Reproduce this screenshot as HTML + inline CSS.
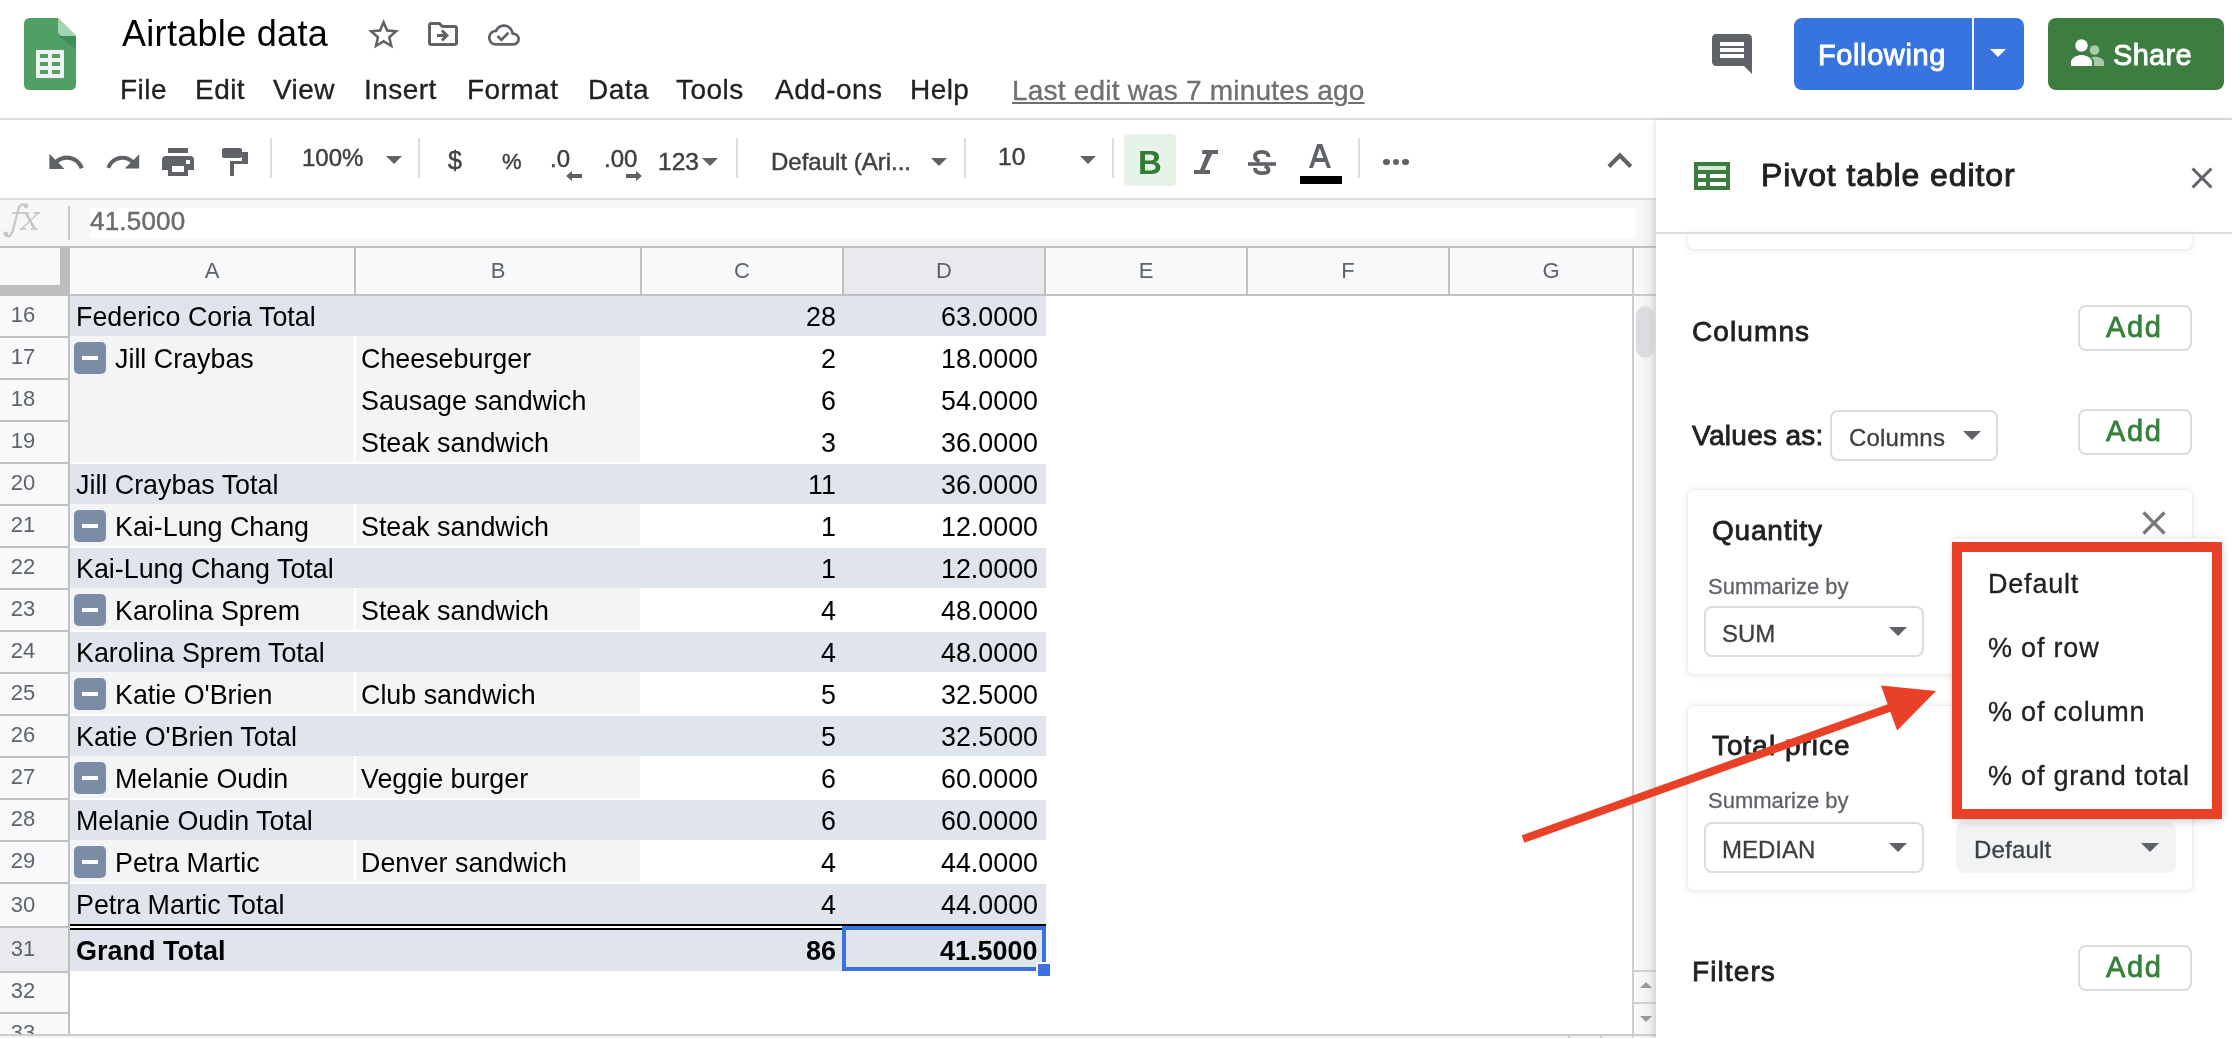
<!DOCTYPE html>
<html><head><meta charset="utf-8"><style>
html,body{margin:0;padding:0;width:2232px;height:1038px;overflow:hidden;background:#fff;}
body{position:relative;font-family:"Liberation Sans",sans-serif;}
.t{position:absolute;line-height:1;white-space:pre;will-change:transform;}
.r{position:absolute;box-sizing:content-box;}
</style></head><body>
<svg class="r" style="left:24px;top:18px;" width="52" height="72" viewBox="0 0 52 72">
<path d="M0 6 Q0 0 6 0 H34 L52 18 V66 Q52 72 46 72 H6 Q0 72 0 66 Z" fill="#4fa064"/>
<path d="M34 0 L52 18 H40 Q34 18 34 12 Z" fill="#a3d3b3"/>
<path d="M34 18 H52 V31 Z" fill="#3f8a5a" opacity="0.9"/>
<rect x="12" y="32" width="28" height="28" fill="#f1f1f1"/>
<rect x="16" y="36" width="8" height="4" fill="#4fa064"/><rect x="28" y="36" width="8" height="4" fill="#4fa064"/>
<rect x="16" y="44" width="8" height="4" fill="#4fa064"/><rect x="28" y="44" width="8" height="4" fill="#4fa064"/>
<rect x="16" y="52" width="8" height="4" fill="#4fa064"/><rect x="28" y="52" width="8" height="4" fill="#4fa064"/>
</svg>
<div class="t" style="left:122.0px;top:15.5px;font-size:36px;color:#000;font-weight:400;font-family:'Liberation Sans', sans-serif;letter-spacing:0.3px;">Airtable data</div>
<svg class="r" style="left:364.9px;top:15.6px;" width="37.2" height="37.2" viewBox="0 0 24 24"><path fill="#5f6368" d="M22 9.24l-7.19-.62L12 2 9.19 8.63 2 9.24l5.46 4.73L5.82 21 12 17.27 18.18 21l-1.63-7.03L22 9.24zM12 15.4l-3.76 2.27 1-4.28-3.32-2.88 4.38-.38L12 6.1l1.71 4.04 4.38.38-3.32 2.88 1 4.28L12 15.4z"/></svg>
<svg class="r" style="left:425px;top:16px;" width="36" height="36" viewBox="0 0 24 24"><path fill="#5f6368" d="M20 6h-8l-2-2H4c-1.1 0-1.99.9-1.99 2L2 18c0 1.1.9 2 2 2h16c1.1 0 2-.9 2-2V8c0-1.1-.9-2-2-2zm0 12H4V6h5.17l2 2H20v10zm-8.01-9l-1.41 1.41L12.16 12H8v2h4.16l-1.59 1.59L11.99 17 16 13.01 11.99 9z"/></svg>
<svg class="r" style="left:488px;top:18.6px;" width="32" height="32" viewBox="0 0 24 24"><path fill="#5f6368" d="M19.35 10.04C18.67 6.59 15.64 4 12 4 9.11 4 6.6 5.64 5.35 8.04 2.34 8.36 0 10.91 0 14c0 3.31 2.69 6 6 6h13c2.76 0 5-2.24 5-5 0-2.64-2.05-4.78-4.65-4.96zM19 18H6c-2.21 0-4-1.790-4-4 0-2.05 1.53-3.76 3.56-3.97l1.07-.11.5-.95C8.08 7.140 9.94 6 12 6c2.62 0 4.88 1.86 5.39 4.43l.3 1.5 1.53.11c1.56.1 2.78 1.41 2.78 2.96 0 1.65-1.35 3-3 3zm-9-3.82l-2.09-2.09L6.5 13.5 10 17l6.01-6.01-1.41-1.41z"/></svg>
<div class="t" style="left:120.0px;top:76.1px;font-size:28px;color:#202124;font-weight:400;font-family:'Liberation Sans', sans-serif;letter-spacing:0.45px;-webkit-text-stroke:0.3px #202124;">File</div>
<div class="t" style="left:195.0px;top:76.1px;font-size:28px;color:#202124;font-weight:400;font-family:'Liberation Sans', sans-serif;letter-spacing:0.45px;-webkit-text-stroke:0.3px #202124;">Edit</div>
<div class="t" style="left:273.0px;top:76.1px;font-size:28px;color:#202124;font-weight:400;font-family:'Liberation Sans', sans-serif;letter-spacing:0.45px;-webkit-text-stroke:0.3px #202124;">View</div>
<div class="t" style="left:364.0px;top:76.1px;font-size:28px;color:#202124;font-weight:400;font-family:'Liberation Sans', sans-serif;letter-spacing:0.45px;-webkit-text-stroke:0.3px #202124;">Insert</div>
<div class="t" style="left:467.0px;top:76.1px;font-size:28px;color:#202124;font-weight:400;font-family:'Liberation Sans', sans-serif;letter-spacing:0.45px;-webkit-text-stroke:0.3px #202124;">Format</div>
<div class="t" style="left:588.0px;top:76.1px;font-size:28px;color:#202124;font-weight:400;font-family:'Liberation Sans', sans-serif;letter-spacing:0.45px;-webkit-text-stroke:0.3px #202124;">Data</div>
<div class="t" style="left:676.0px;top:76.1px;font-size:28px;color:#202124;font-weight:400;font-family:'Liberation Sans', sans-serif;letter-spacing:0.45px;-webkit-text-stroke:0.3px #202124;">Tools</div>
<div class="t" style="left:775.0px;top:76.1px;font-size:28px;color:#202124;font-weight:400;font-family:'Liberation Sans', sans-serif;letter-spacing:0.45px;-webkit-text-stroke:0.3px #202124;">Add-ons</div>
<div class="t" style="left:910.0px;top:76.1px;font-size:28px;color:#202124;font-weight:400;font-family:'Liberation Sans', sans-serif;letter-spacing:0.45px;-webkit-text-stroke:0.3px #202124;">Help</div>
<div class="t" style="left:1012.0px;top:77.0px;font-size:28px;color:#6f6f6f;font-weight:400;font-family:'Liberation Sans', sans-serif;letter-spacing:0.2px;-webkit-text-stroke:0.35px #6f6f6f;text-decoration:underline;text-underline-offset:2px;text-decoration-thickness:2px;">Last edit was 7 minutes ago</div>
<svg class="r" style="left:1707.6px;top:29.6px;" width="48" height="48" viewBox="0 0 24 24"><path fill="#5f6368" d="M21.99 4c0-1.1-.89-2-1.99-2H4c-1.1 0-2 .9-2 2v12c0 1.1.9 2 2 2h14l4 4-.01-18zM18 14H6v-2h12v2zm0-3H6V9h12v2zm0-3H6V6h12v2z"/></svg>
<div class="r" style="left:1794px;top:18px;width:230px;height:72px;background:#3874e0;border-radius:8px"></div>
<div class="r" style="left:1972px;top:18px;width:2px;height:72px;background:#ffffff;"></div>
<div class="t" style="left:1818.0px;top:40.6px;font-size:29px;color:#fff;font-weight:400;font-family:'Liberation Sans', sans-serif;letter-spacing:0.6px;-webkit-text-stroke:0.9px #fff;">Following</div>
<svg class="r" style="left:1990px;top:49px;" width="16" height="8" viewBox="0 0 10 5"><path fill="#fff" d="M0 0 L10 0 L5 5 Z"/></svg>
<div class="r" style="left:2048px;top:18px;width:176px;height:72px;background:#3d7e40;border-radius:8px"></div>
<svg class="r" style="left:2071px;top:39px;" width="33" height="27" viewBox="0 0 33 27"><circle cx="10.5" cy="6.5" r="6.2" fill="#fff"/><path d="M0 27 v-4 c0-4.5 7-7 10.5-7 s10.5 2.5 10.5 7 v4z" fill="#fff"/><circle cx="23.5" cy="11" r="4.8" fill="#a9c9ab"/><path d="M20 18.2 c1.2-.3 2.5-.5 3.5-.5 c3.5 0 9.5 1.8 9.5 5.2 v4.1 h-10 v-4 c0-1.9-1.1-3.5-3-4.8z" fill="#a9c9ab"/></svg>
<div class="t" style="left:2113.0px;top:40.6px;font-size:29px;color:#fff;font-weight:400;font-family:'Liberation Sans', sans-serif;letter-spacing:0.3px;-webkit-text-stroke:0.9px #fff;">Share</div>
<div class="r" style="left:0px;top:118px;width:2232px;height:2px;background:#dadce0;"></div>
<svg class="r" style="left:46.34px;top:141.94px" width="40.32" height="40.32" viewBox="0 0 24 24"><path fill="#5f6368" d="M12.5 8c-2.65 0-5.05.99-6.9 2.6L2 7v9h9l-3.62-3.62c1.39-1.16 3.16-1.88 5.12-1.88 3.54 0 6.55 2.31 7.6 5.5l2.37-.78C21.08 11.03 17.15 8 12.5 8z"/></svg>
<svg class="r" style="left:103.54px;top:142.50px" width="38.40" height="38.40" viewBox="0 0 24 24"><path fill="#5f6368" d="M18.4 10.6C16.55 8.99 14.15 8 11.5 8c-4.65 0-8.58 3.03-9.96 7.22L3.9 16c1.05-3.19 4.05-5.5 7.6-5.5 1.95 0 3.73.72 5.12 1.88L13 16h9V7l-3.6 3.6z"/></svg>
<div class="r" style="left:168px;top:148px;width:20px;height:5px;background:#5f6368;"></div>
<div class="r" style="left:162px;top:156px;width:32px;height:14px;background:#5f6368;border-radius:4px 4px 0 0"></div>
<div class="r" style="left:186px;top:160px;width:4px;height:4px;background:#fff;"></div>
<div class="r" style="left:168px;top:166px;width:20px;height:10px;background:#5f6368;"></div>
<div class="r" style="left:172px;top:166px;width:12px;height:6px;background:#fff;"></div>
<div class="r" style="left:222px;top:148px;width:20px;height:10px;background:#5f6368;border-radius:2px"></div>
<div class="r" style="left:242px;top:152px;width:6px;height:12px;background:#5f6368;"></div>
<div class="r" style="left:230px;top:161px;width:18px;height:3px;background:#5f6368;"></div>
<div class="r" style="left:230px;top:161px;width:4px;height:15px;background:#5f6368;"></div>
<div class="r" style="left:270px;top:138px;width:2px;height:40px;background:#dadce0;"></div>
<div class="r" style="left:418px;top:138px;width:2px;height:40px;background:#dadce0;"></div>
<div class="r" style="left:736px;top:138px;width:2px;height:40px;background:#dadce0;"></div>
<div class="r" style="left:964px;top:138px;width:2px;height:40px;background:#dadce0;"></div>
<div class="r" style="left:1112px;top:138px;width:2px;height:40px;background:#dadce0;"></div>
<div class="r" style="left:1358px;top:138px;width:2px;height:40px;background:#dadce0;"></div>
<div class="t" style="left:302.0px;top:145.7px;font-size:24px;color:#3c4043;font-weight:400;font-family:'Liberation Sans', sans-serif;-webkit-text-stroke:0.45px currentColor;">100%</div>
<svg class="r" style="left:386px;top:156px;" width="16" height="8" viewBox="0 0 10 5"><path fill="#5f6368" d="M0 0 H10 L5 5 Z"/></svg>
<div class="t" style="left:448.0px;top:148.4px;font-size:25px;color:#3c4043;font-weight:400;font-family:'Liberation Sans', sans-serif;-webkit-text-stroke:0.45px currentColor;">$</div>
<div class="t" style="left:502.0px;top:151.0px;font-size:22px;color:#3c4043;font-weight:400;font-family:'Liberation Sans', sans-serif;-webkit-text-stroke:0.45px currentColor;">%</div>
<div class="t" style="left:549.5px;top:147.3px;font-size:24px;color:#3c4043;font-weight:400;font-family:'Liberation Sans', sans-serif;-webkit-text-stroke:0.45px currentColor;">.0</div>
<svg class="r" style="left:566px;top:171px;" width="16" height="10" viewBox="0 0 16 10"><path fill="#5f6368" d="M6 0 L0 5 L6 10 V7 H16 V3 H6 Z"/></svg>
<div class="t" style="left:604.0px;top:147.3px;font-size:24px;color:#3c4043;font-weight:400;font-family:'Liberation Sans', sans-serif;-webkit-text-stroke:0.45px currentColor;">.00</div>
<svg class="r" style="left:626px;top:171px;" width="16" height="10" viewBox="0 0 16 10"><path fill="#5f6368" d="M10 0 L16 5 L10 10 V7 H0 V3 H10 Z"/></svg>
<div class="t" style="left:658.0px;top:149.6px;font-size:24.5px;color:#3c4043;font-weight:400;font-family:'Liberation Sans', sans-serif;-webkit-text-stroke:0.45px currentColor;">123</div>
<svg class="r" style="left:702px;top:158px;" width="16" height="8" viewBox="0 0 10 5"><path fill="#5f6368" d="M0 0 H10 L5 5 Z"/></svg>
<div class="t" style="left:771.0px;top:149.7px;font-size:24px;color:#3c4043;font-weight:400;font-family:'Liberation Sans', sans-serif;-webkit-text-stroke:0.45px currentColor;">Default (Ari...</div>
<svg class="r" style="left:930.7px;top:158px;" width="16" height="8" viewBox="0 0 10 5"><path fill="#5f6368" d="M0 0 H10 L5 5 Z"/></svg>
<div class="t" style="left:997.5px;top:145.3px;font-size:24.5px;color:#3c4043;font-weight:400;font-family:'Liberation Sans', sans-serif;-webkit-text-stroke:0.45px currentColor;">10</div>
<svg class="r" style="left:1080px;top:155.5px;" width="16" height="8" viewBox="0 0 10 5"><path fill="#5f6368" d="M0 0 H10 L5 5 Z"/></svg>
<div class="r" style="left:1124px;top:134px;width:52px;height:52px;background:#e7f3e9;border-radius:4px"></div>
<div class="t" style="left:850.0px;width:600px;text-align:center;top:145.9px;font-size:33px;color:#2e7d32;font-weight:700;">B</div>
<svg class="r" style="left:0;top:0" width="1300" height="200" viewBox="0 0 1300 200"><polygon fill="#5f6368" points="1202.2,150 1218,150 1218,154 1212.2,154 1204.7,170 1210,170 1210,174 1194,174 1194,170 1200,170 1206.5,154 1202.2,154"/></svg>
<svg class="r" style="left:0;top:0" width="1300" height="200" viewBox="0 0 1300 200"><g fill="none" stroke="#5f6368" stroke-width="3.9"><path d="M1268.5 157 C1268.5 153 1265.5 151.9 1261.5 151.9 C1257.5 151.9 1255 153.8 1255 156.5 C1255 159 1257 160.5 1259.5 161.5"/><path d="M1264.8 166 C1267.2 167 1268.5 168.5 1268.5 170.5 C1268.5 172.5 1266 173.1 1261.5 173.1 C1257.5 173.1 1255 171.5 1255 168"/></g><rect x="1248" y="162.2" width="28" height="3.6" fill="#5f6368"/></svg>
<svg class="r" style="left:0;top:0" width="1400" height="200" viewBox="0 0 1400 200"><path fill="#5f6368" fill-rule="evenodd" d="M1309,168 L1317.2,144 H1322.2 L1331,168 H1327 L1325,162 H1315 L1313,168 Z M1316.4,158 H1323.3 L1319.75,148.2 Z"/></svg>
<div class="r" style="left:1300px;top:176px;width:42px;height:8px;background:#000;"></div>
<div class="r" style="left:1383.0px;top:158.7px;width:6.5px;height:6.5px;background:#5f6368;border-radius:50%"></div>
<div class="r" style="left:1392.6px;top:158.7px;width:6.5px;height:6.5px;background:#5f6368;border-radius:50%"></div>
<div class="r" style="left:1402.2px;top:158.7px;width:6.5px;height:6.5px;background:#5f6368;border-radius:50%"></div>
<svg class="r" style="left:1595.38px;top:135.64px" width="49.68" height="49.68" viewBox="0 0 24 24"><path fill="#5f6368" d="M12 8l-6 6 1.41 1.41L12 10.83l4.59 4.58L18 14z"/></svg>
<div class="r" style="left:0px;top:198px;width:1656px;height:2px;background:#dadce0;"></div>
<div class="r" style="left:0px;top:200px;width:1656px;height:46px;background:#f7f7f7;"></div>
<div class="r" style="left:90px;top:208px;width:1546px;height:30px;background:#ffffff;"></div>
<svg class="r" style="left:0;top:198px" width="60" height="50" viewBox="0 0 60 50"><g fill="none" stroke="#c8c8c8"><path d="M6 36.5 Q9.5 41.5 12.8 33 L18.2 11.5 Q20.5 3.5 26 8" stroke-width="2.3"/><path d="M25.8 14.8 L34.8 31" stroke-width="2.6"/><path d="M38.5 14.8 L21.8 30.8" stroke-width="1.5"/></g><g fill="#c8c8c8"><circle cx="5.9" cy="36" r="2.4"/><circle cx="26" cy="7.8" r="2.4"/><rect x="12" y="14" width="17" height="1.8"/><rect x="34" y="14" width="6" height="1.8"/><rect x="20" y="30" width="6" height="1.8"/><rect x="31" y="30" width="6.6" height="1.8"/></g></svg>
<div class="r" style="left:68px;top:206px;width:2px;height:34px;background:#c7c7c7;"></div>
<div class="t" style="left:90.0px;top:207.9px;font-size:26px;color:#6b6b6b;font-weight:400;font-family:'Liberation Sans', sans-serif;letter-spacing:0.2px;-webkit-text-stroke:0.45px currentColor;">41.5000</div>
<div class="r" style="left:0px;top:246px;width:1656px;height:2px;background:#c0c0c0;"></div>
<div class="r" style="left:0px;top:248px;width:1634px;height:46px;background:#f8f9fa;"></div>
<div class="r" style="left:844px;top:248px;width:200px;height:46px;background:#e8eaed;"></div>
<div class="t" style="left:-88.0px;width:600px;text-align:center;top:260.2px;font-size:22px;color:#5f6368;font-weight:400;">A</div>
<div class="t" style="left:198.0px;width:600px;text-align:center;top:260.2px;font-size:22px;color:#5f6368;font-weight:400;">B</div>
<div class="t" style="left:442.0px;width:600px;text-align:center;top:260.2px;font-size:22px;color:#5f6368;font-weight:400;">C</div>
<div class="t" style="left:644.0px;width:600px;text-align:center;top:260.2px;font-size:22px;color:#5f6368;font-weight:400;">D</div>
<div class="t" style="left:846.0px;width:600px;text-align:center;top:260.2px;font-size:22px;color:#5f6368;font-weight:400;">E</div>
<div class="t" style="left:1048.0px;width:600px;text-align:center;top:260.2px;font-size:22px;color:#5f6368;font-weight:400;">F</div>
<div class="t" style="left:1251.0px;width:600px;text-align:center;top:260.2px;font-size:22px;color:#5f6368;font-weight:400;">G</div>
<div class="r" style="left:354px;top:248px;width:2px;height:46px;background:#c0c0c0;"></div>
<div class="r" style="left:640px;top:248px;width:2px;height:46px;background:#c0c0c0;"></div>
<div class="r" style="left:842px;top:248px;width:2px;height:46px;background:#c0c0c0;"></div>
<div class="r" style="left:1044px;top:248px;width:2px;height:46px;background:#c0c0c0;"></div>
<div class="r" style="left:1246px;top:248px;width:2px;height:46px;background:#c0c0c0;"></div>
<div class="r" style="left:1448px;top:248px;width:2px;height:46px;background:#c0c0c0;"></div>
<div class="r" style="left:0px;top:294px;width:1634px;height:2px;background:#c0c0c0;"></div>
<div class="r" style="left:60px;top:248px;width:10px;height:46px;background:#bdbdbd;"></div>
<div class="r" style="left:0px;top:285px;width:70px;height:10px;background:#bdbdbd;"></div>
<div class="r" style="left:0px;top:296px;width:68px;height:738px;background:#f8f9fa;"></div>
<div class="r" style="left:0px;top:928px;width:68px;height:43px;background:#e8eaed;"></div>
<div class="r" style="left:68px;top:296px;width:2px;height:738px;background:#c0c0c0;"></div>
<div class="r" style="left:0px;top:336px;width:68px;height:2px;background:#c0c0c0;"></div>
<div class="r" style="left:0px;top:378px;width:68px;height:2px;background:#c0c0c0;"></div>
<div class="r" style="left:0px;top:420px;width:68px;height:2px;background:#c0c0c0;"></div>
<div class="r" style="left:0px;top:462px;width:68px;height:2px;background:#c0c0c0;"></div>
<div class="r" style="left:0px;top:504px;width:68px;height:2px;background:#c0c0c0;"></div>
<div class="r" style="left:0px;top:546px;width:68px;height:2px;background:#c0c0c0;"></div>
<div class="r" style="left:0px;top:588px;width:68px;height:2px;background:#c0c0c0;"></div>
<div class="r" style="left:0px;top:630px;width:68px;height:2px;background:#c0c0c0;"></div>
<div class="r" style="left:0px;top:672px;width:68px;height:2px;background:#c0c0c0;"></div>
<div class="r" style="left:0px;top:714px;width:68px;height:2px;background:#c0c0c0;"></div>
<div class="r" style="left:0px;top:756px;width:68px;height:2px;background:#c0c0c0;"></div>
<div class="r" style="left:0px;top:798px;width:68px;height:2px;background:#c0c0c0;"></div>
<div class="r" style="left:0px;top:840px;width:68px;height:2px;background:#c0c0c0;"></div>
<div class="r" style="left:0px;top:882px;width:68px;height:2px;background:#c0c0c0;"></div>
<div class="r" style="left:0px;top:926px;width:68px;height:2px;background:#c0c0c0;"></div>
<div class="r" style="left:0px;top:971px;width:68px;height:2px;background:#c0c0c0;"></div>
<div class="r" style="left:0px;top:1012px;width:68px;height:2px;background:#c0c0c0;"></div>
<div class="t" style="left:-277.0px;width:600px;text-align:center;top:304.2px;font-size:22px;color:#5f6368;font-weight:400;">16</div>
<div class="t" style="left:-277.0px;width:600px;text-align:center;top:346.2px;font-size:22px;color:#5f6368;font-weight:400;">17</div>
<div class="t" style="left:-277.0px;width:600px;text-align:center;top:388.2px;font-size:22px;color:#5f6368;font-weight:400;">18</div>
<div class="t" style="left:-277.0px;width:600px;text-align:center;top:430.2px;font-size:22px;color:#5f6368;font-weight:400;">19</div>
<div class="t" style="left:-277.0px;width:600px;text-align:center;top:472.2px;font-size:22px;color:#5f6368;font-weight:400;">20</div>
<div class="t" style="left:-277.0px;width:600px;text-align:center;top:514.2px;font-size:22px;color:#5f6368;font-weight:400;">21</div>
<div class="t" style="left:-277.0px;width:600px;text-align:center;top:556.2px;font-size:22px;color:#5f6368;font-weight:400;">22</div>
<div class="t" style="left:-277.0px;width:600px;text-align:center;top:598.2px;font-size:22px;color:#5f6368;font-weight:400;">23</div>
<div class="t" style="left:-277.0px;width:600px;text-align:center;top:640.2px;font-size:22px;color:#5f6368;font-weight:400;">24</div>
<div class="t" style="left:-277.0px;width:600px;text-align:center;top:682.2px;font-size:22px;color:#5f6368;font-weight:400;">25</div>
<div class="t" style="left:-277.0px;width:600px;text-align:center;top:724.2px;font-size:22px;color:#5f6368;font-weight:400;">26</div>
<div class="t" style="left:-277.0px;width:600px;text-align:center;top:766.2px;font-size:22px;color:#5f6368;font-weight:400;">27</div>
<div class="t" style="left:-277.0px;width:600px;text-align:center;top:808.2px;font-size:22px;color:#5f6368;font-weight:400;">28</div>
<div class="t" style="left:-277.0px;width:600px;text-align:center;top:850.2px;font-size:22px;color:#5f6368;font-weight:400;">29</div>
<div class="t" style="left:-277.0px;width:600px;text-align:center;top:894.2px;font-size:22px;color:#5f6368;font-weight:400;">30</div>
<div class="t" style="left:-277.0px;width:600px;text-align:center;top:938.4px;font-size:22px;color:#5f6368;font-weight:400;">31</div>
<div class="t" style="left:-277.0px;width:600px;text-align:center;top:980.2px;font-size:22px;color:#5f6368;font-weight:400;">32</div>
<div class="t" style="left:-277.0px;width:600px;text-align:center;top:1022.4px;font-size:22px;color:#5f6368;font-weight:400;">33</div>
<div class="r" style="left:70px;top:296px;width:976px;height:40px;background:#e0e4ec;"></div>
<div class="t" style="left:75.5px;top:304.1px;font-size:26.85px;color:#000;font-weight:400;font-family:'Liberation Sans', sans-serif;">Federico Coria Total</div>
<div class="t" style="right:1396.0px;top:304.1px;font-size:26.85px;color:#000;font-weight:400;">28</div>
<div class="t" style="right:1194.0px;top:304.1px;font-size:26.85px;color:#000;font-weight:400;">63.0000</div>
<div class="r" style="left:70px;top:336px;width:284px;height:42px;background:#f3f4f6;"></div>
<div class="r" style="left:356px;top:336px;width:284px;height:42px;background:#f3f4f6;"></div>
<div class="r" style="left:74px;top:342px;width:32px;height:32px;background:#7a8ca6;border-radius:5px"></div>
<div class="r" style="left:82px;top:356px;width:16px;height:4px;background:#fff;"></div>
<div class="t" style="left:115.0px;top:346.1px;font-size:26.85px;color:#000;font-weight:400;font-family:'Liberation Sans', sans-serif;">Jill Craybas</div>
<div class="t" style="left:361.0px;top:346.1px;font-size:26.85px;color:#000;font-weight:400;font-family:'Liberation Sans', sans-serif;">Cheeseburger</div>
<div class="t" style="right:1396.0px;top:346.1px;font-size:26.85px;color:#000;font-weight:400;">2</div>
<div class="t" style="right:1194.0px;top:346.1px;font-size:26.85px;color:#000;font-weight:400;">18.0000</div>
<div class="r" style="left:70px;top:378px;width:284px;height:42px;background:#f3f4f6;"></div>
<div class="r" style="left:356px;top:378px;width:284px;height:42px;background:#f3f4f6;"></div>
<div class="t" style="left:361.0px;top:388.1px;font-size:26.85px;color:#000;font-weight:400;font-family:'Liberation Sans', sans-serif;">Sausage sandwich</div>
<div class="t" style="right:1396.0px;top:388.1px;font-size:26.85px;color:#000;font-weight:400;">6</div>
<div class="t" style="right:1194.0px;top:388.1px;font-size:26.85px;color:#000;font-weight:400;">54.0000</div>
<div class="r" style="left:70px;top:420px;width:284px;height:42px;background:#f3f4f6;"></div>
<div class="r" style="left:356px;top:420px;width:284px;height:42px;background:#f3f4f6;"></div>
<div class="t" style="left:361.0px;top:430.1px;font-size:26.85px;color:#000;font-weight:400;font-family:'Liberation Sans', sans-serif;">Steak sandwich</div>
<div class="t" style="right:1396.0px;top:430.1px;font-size:26.85px;color:#000;font-weight:400;">3</div>
<div class="t" style="right:1194.0px;top:430.1px;font-size:26.85px;color:#000;font-weight:400;">36.0000</div>
<div class="r" style="left:70px;top:464px;width:976px;height:40px;background:#e0e4ec;"></div>
<div class="t" style="left:75.5px;top:472.1px;font-size:26.85px;color:#000;font-weight:400;font-family:'Liberation Sans', sans-serif;">Jill Craybas Total</div>
<div class="t" style="right:1396.0px;top:472.1px;font-size:26.85px;color:#000;font-weight:400;">11</div>
<div class="t" style="right:1194.0px;top:472.1px;font-size:26.85px;color:#000;font-weight:400;">36.0000</div>
<div class="r" style="left:70px;top:504px;width:284px;height:42px;background:#f3f4f6;"></div>
<div class="r" style="left:356px;top:504px;width:284px;height:42px;background:#f3f4f6;"></div>
<div class="r" style="left:74px;top:510px;width:32px;height:32px;background:#7a8ca6;border-radius:5px"></div>
<div class="r" style="left:82px;top:524px;width:16px;height:4px;background:#fff;"></div>
<div class="t" style="left:115.0px;top:514.1px;font-size:26.85px;color:#000;font-weight:400;font-family:'Liberation Sans', sans-serif;">Kai-Lung Chang</div>
<div class="t" style="left:361.0px;top:514.1px;font-size:26.85px;color:#000;font-weight:400;font-family:'Liberation Sans', sans-serif;">Steak sandwich</div>
<div class="t" style="right:1396.0px;top:514.1px;font-size:26.85px;color:#000;font-weight:400;">1</div>
<div class="t" style="right:1194.0px;top:514.1px;font-size:26.85px;color:#000;font-weight:400;">12.0000</div>
<div class="r" style="left:70px;top:548px;width:976px;height:40px;background:#e0e4ec;"></div>
<div class="t" style="left:75.5px;top:556.1px;font-size:26.85px;color:#000;font-weight:400;font-family:'Liberation Sans', sans-serif;">Kai-Lung Chang Total</div>
<div class="t" style="right:1396.0px;top:556.1px;font-size:26.85px;color:#000;font-weight:400;">1</div>
<div class="t" style="right:1194.0px;top:556.1px;font-size:26.85px;color:#000;font-weight:400;">12.0000</div>
<div class="r" style="left:70px;top:588px;width:284px;height:42px;background:#f3f4f6;"></div>
<div class="r" style="left:356px;top:588px;width:284px;height:42px;background:#f3f4f6;"></div>
<div class="r" style="left:74px;top:594px;width:32px;height:32px;background:#7a8ca6;border-radius:5px"></div>
<div class="r" style="left:82px;top:608px;width:16px;height:4px;background:#fff;"></div>
<div class="t" style="left:115.0px;top:598.1px;font-size:26.85px;color:#000;font-weight:400;font-family:'Liberation Sans', sans-serif;">Karolina Sprem</div>
<div class="t" style="left:361.0px;top:598.1px;font-size:26.85px;color:#000;font-weight:400;font-family:'Liberation Sans', sans-serif;">Steak sandwich</div>
<div class="t" style="right:1396.0px;top:598.1px;font-size:26.85px;color:#000;font-weight:400;">4</div>
<div class="t" style="right:1194.0px;top:598.1px;font-size:26.85px;color:#000;font-weight:400;">48.0000</div>
<div class="r" style="left:70px;top:632px;width:976px;height:40px;background:#e0e4ec;"></div>
<div class="t" style="left:75.5px;top:640.1px;font-size:26.85px;color:#000;font-weight:400;font-family:'Liberation Sans', sans-serif;">Karolina Sprem Total</div>
<div class="t" style="right:1396.0px;top:640.1px;font-size:26.85px;color:#000;font-weight:400;">4</div>
<div class="t" style="right:1194.0px;top:640.1px;font-size:26.85px;color:#000;font-weight:400;">48.0000</div>
<div class="r" style="left:70px;top:672px;width:284px;height:42px;background:#f3f4f6;"></div>
<div class="r" style="left:356px;top:672px;width:284px;height:42px;background:#f3f4f6;"></div>
<div class="r" style="left:74px;top:678px;width:32px;height:32px;background:#7a8ca6;border-radius:5px"></div>
<div class="r" style="left:82px;top:692px;width:16px;height:4px;background:#fff;"></div>
<div class="t" style="left:115.0px;top:682.1px;font-size:26.85px;color:#000;font-weight:400;font-family:'Liberation Sans', sans-serif;">Katie O'Brien</div>
<div class="t" style="left:361.0px;top:682.1px;font-size:26.85px;color:#000;font-weight:400;font-family:'Liberation Sans', sans-serif;">Club sandwich</div>
<div class="t" style="right:1396.0px;top:682.1px;font-size:26.85px;color:#000;font-weight:400;">5</div>
<div class="t" style="right:1194.0px;top:682.1px;font-size:26.85px;color:#000;font-weight:400;">32.5000</div>
<div class="r" style="left:70px;top:716px;width:976px;height:40px;background:#e0e4ec;"></div>
<div class="t" style="left:75.5px;top:724.1px;font-size:26.85px;color:#000;font-weight:400;font-family:'Liberation Sans', sans-serif;">Katie O'Brien Total</div>
<div class="t" style="right:1396.0px;top:724.1px;font-size:26.85px;color:#000;font-weight:400;">5</div>
<div class="t" style="right:1194.0px;top:724.1px;font-size:26.85px;color:#000;font-weight:400;">32.5000</div>
<div class="r" style="left:70px;top:756px;width:284px;height:42px;background:#f3f4f6;"></div>
<div class="r" style="left:356px;top:756px;width:284px;height:42px;background:#f3f4f6;"></div>
<div class="r" style="left:74px;top:762px;width:32px;height:32px;background:#7a8ca6;border-radius:5px"></div>
<div class="r" style="left:82px;top:776px;width:16px;height:4px;background:#fff;"></div>
<div class="t" style="left:115.0px;top:766.1px;font-size:26.85px;color:#000;font-weight:400;font-family:'Liberation Sans', sans-serif;">Melanie Oudin</div>
<div class="t" style="left:361.0px;top:766.1px;font-size:26.85px;color:#000;font-weight:400;font-family:'Liberation Sans', sans-serif;">Veggie burger</div>
<div class="t" style="right:1396.0px;top:766.1px;font-size:26.85px;color:#000;font-weight:400;">6</div>
<div class="t" style="right:1194.0px;top:766.1px;font-size:26.85px;color:#000;font-weight:400;">60.0000</div>
<div class="r" style="left:70px;top:800px;width:976px;height:40px;background:#e0e4ec;"></div>
<div class="t" style="left:75.5px;top:808.1px;font-size:26.85px;color:#000;font-weight:400;font-family:'Liberation Sans', sans-serif;">Melanie Oudin Total</div>
<div class="t" style="right:1396.0px;top:808.1px;font-size:26.85px;color:#000;font-weight:400;">6</div>
<div class="t" style="right:1194.0px;top:808.1px;font-size:26.85px;color:#000;font-weight:400;">60.0000</div>
<div class="r" style="left:70px;top:840px;width:284px;height:42px;background:#f3f4f6;"></div>
<div class="r" style="left:356px;top:840px;width:284px;height:42px;background:#f3f4f6;"></div>
<div class="r" style="left:74px;top:846px;width:32px;height:32px;background:#7a8ca6;border-radius:5px"></div>
<div class="r" style="left:82px;top:860px;width:16px;height:4px;background:#fff;"></div>
<div class="t" style="left:115.0px;top:850.1px;font-size:26.85px;color:#000;font-weight:400;font-family:'Liberation Sans', sans-serif;">Petra Martic</div>
<div class="t" style="left:361.0px;top:850.1px;font-size:26.85px;color:#000;font-weight:400;font-family:'Liberation Sans', sans-serif;">Denver sandwich</div>
<div class="t" style="right:1396.0px;top:850.1px;font-size:26.85px;color:#000;font-weight:400;">4</div>
<div class="t" style="right:1194.0px;top:850.1px;font-size:26.85px;color:#000;font-weight:400;">44.0000</div>
<div class="r" style="left:70px;top:884px;width:976px;height:40px;background:#e0e4ec;"></div>
<div class="t" style="left:75.5px;top:892.1px;font-size:26.85px;color:#000;font-weight:400;font-family:'Liberation Sans', sans-serif;">Petra Martic Total</div>
<div class="t" style="right:1396.0px;top:892.1px;font-size:26.85px;color:#000;font-weight:400;">4</div>
<div class="t" style="right:1194.0px;top:892.1px;font-size:26.85px;color:#000;font-weight:400;">44.0000</div>
<div class="r" style="left:70px;top:924px;width:976px;height:2px;background:#000;"></div>
<div class="r" style="left:70px;top:928px;width:976px;height:2px;background:#000;"></div>
<div class="r" style="left:70px;top:930px;width:976px;height:41px;background:#e0e4ec;"></div>
<div class="t" style="left:75.5px;top:938.3px;font-size:27px;color:#000;font-weight:700;font-family:'Liberation Sans', sans-serif;">Grand Total</div>
<div class="t" style="right:1396.0px;top:938.3px;font-size:27px;color:#000;font-weight:700;">86</div>
<div class="t" style="right:1194.0px;top:938.3px;font-size:27px;color:#000;font-weight:700;">41.5000</div>
<div class="r" style="left:842px;top:926px;width:196px;height:37px;border:4px solid #3b72e0;"></div>
<div class="r" style="left:1036px;top:962px;width:16px;height:16px;background:#fff;"></div>
<div class="r" style="left:1038px;top:964px;width:12px;height:12px;background:#3b72e0;"></div>
<div class="r" style="left:0px;top:1034px;width:1656px;height:4px;background:#f1f3f4;"></div>
<div class="r" style="left:0px;top:1034px;width:1656px;height:2px;background:#c7c7c7;"></div>
<div class="r" style="left:1636px;top:200px;width:20px;height:46px;background:linear-gradient(to right,#f8f8f8 0%,#f2f2f2 55%,#e8e8e8 100%)"></div>
<div class="r" style="left:1634px;top:246px;width:22px;height:792px;background:linear-gradient(to right,#fbfbfb 0%,#f4f4f4 55%,#e8e8e8 100%)"></div>
<div class="r" style="left:1632px;top:248px;width:2px;height:790px;background:#cdcdcd;"></div>
<div class="r" style="left:0px;top:1034px;width:1656px;height:2px;background:#cdcdcd;"></div>
<div class="r" style="left:0px;top:246px;width:1656px;height:2px;background:#c0c0c0;"></div>
<div class="r" style="left:1634px;top:294px;width:22px;height:2px;background:#c7c7c7;"></div>
<div class="r" style="left:1636px;top:306px;width:18px;height:52px;background:#dadce0;border-radius:9px"></div>
<div class="r" style="left:1634px;top:970px;width:22px;height:2px;background:#d0d0d0;"></div>
<div class="r" style="left:1634px;top:1002px;width:22px;height:2px;background:#d0d0d0;"></div>
<svg class="r" style="left:1640px;top:981px;" width="12" height="8" viewBox="0 0 12 8"><path fill="#999" d="M0 7 L6 1 L12 7 Z"/></svg>
<svg class="r" style="left:1640px;top:1015px;" width="12" height="8" viewBox="0 0 12 8"><path fill="#999" d="M0 1 L6 7 L12 1 Z"/></svg>
<div class="r" style="left:1568px;top:1036px;width:2px;height:2px;background:#c7c7c7;"></div>
<div class="r" style="left:1600px;top:1036px;width:2px;height:2px;background:#c7c7c7;"></div>
<div class="r" style="left:1656px;top:120px;width:576px;height:918px;background:#fff;box-shadow:-2px 0 6px rgba(0,0,0,0.10)"></div>
<svg class="r" style="left:1694px;top:162px;" width="36" height="28" viewBox="0 0 36 28"><rect width="36" height="28" fill="#3b7d3f"/><rect x="4" y="4" width="28" height="4" fill="#d5e8d8"/><rect x="4" y="12" width="8" height="4" fill="#fff"/><rect x="16" y="12" width="16" height="4" fill="#fff"/><rect x="4" y="20" width="8" height="4" fill="#fff"/><rect x="16" y="20" width="16" height="4" fill="#fff"/></svg>
<div class="t" style="left:1761.0px;top:159.2px;font-size:32px;color:#202124;font-weight:400;font-family:'Liberation Sans', sans-serif;letter-spacing:0.9px;-webkit-text-stroke:0.9px #202124;">Pivot table editor</div>
<svg class="r" style="left:2183.5px;top:160px;" width="36" height="36" viewBox="0 0 24 24"><path fill="#5f6368" d="M19 6.41L17.59 5 12 10.59 6.41 5 5 6.41 10.59 12 5 17.59 6.41 19 12 13.41 17.59 19 19 17.59 13.41 12z"/></svg>
<div class="r" style="left:1656px;top:232px;width:576px;height:2px;background:#dadce0;"></div>
<div class="r" style="left:1688px;top:234px;width:504px;height:15px;background:#fff;border-radius:0 0 5px 5px;box-shadow:0 0 2px rgba(60,64,67,0.12),0 1px 6px 1px rgba(60,64,67,0.10)"></div>
<div class="r" style="left:1656px;top:232px;width:576px;height:2px;background:#dadce0;"></div>
<div class="t" style="left:1692.0px;top:318.3px;font-size:28px;color:#202124;font-weight:400;font-family:'Liberation Sans', sans-serif;letter-spacing:1.1px;-webkit-text-stroke:0.8px #202124;">Columns</div>
<div class="r" style="left:2078px;top:305px;width:110px;height:42px;border:2px solid #dadce0;border-radius:8px;background:#fff"></div>
<div class="t" style="left:2106.0px;top:313.4px;font-size:29px;color:#37803c;font-weight:400;font-family:'Liberation Sans', sans-serif;letter-spacing:1.6px;-webkit-text-stroke:0.8px #37803c;">Add</div>
<div class="t" style="left:1692.0px;top:422.3px;font-size:28px;color:#202124;font-weight:400;font-family:'Liberation Sans', sans-serif;letter-spacing:0.3px;-webkit-text-stroke:0.8px #202124;">Values as:</div>
<div class="r" style="left:1830px;top:410px;width:164px;height:47px;border:2px solid #dadce0;border-radius:8px;background:#fff"></div>
<div class="t" style="left:1849.0px;top:425.7px;font-size:24px;color:#3c4043;font-weight:400;font-family:'Liberation Sans', sans-serif;letter-spacing:0.2px;-webkit-text-stroke:0.3px #3c4043;">Columns</div>
<svg class="r" style="left:1963px;top:431px;" width="18" height="9" viewBox="0 0 10 5"><path fill="#5f6368" d="M0 0 H10 L5 5 Z"/></svg>
<div class="r" style="left:2078px;top:409px;width:110px;height:42px;border:2px solid #dadce0;border-radius:8px;background:#fff"></div>
<div class="t" style="left:2106.0px;top:417.4px;font-size:29px;color:#37803c;font-weight:400;font-family:'Liberation Sans', sans-serif;letter-spacing:1.6px;-webkit-text-stroke:0.8px #37803c;">Add</div>
<div class="r" style="left:1688px;top:490px;width:504px;height:184px;background:#fff;border-radius:5px;box-shadow:0 0 2px rgba(60,64,67,0.12),0 1px 6px 1px rgba(60,64,67,0.10)"></div>
<div class="t" style="left:1712.0px;top:516.8px;font-size:28px;color:#202124;font-weight:400;font-family:'Liberation Sans', sans-serif;letter-spacing:0.8px;-webkit-text-stroke:0.8px #202124;">Quantity</div>
<svg class="r" style="left:2134px;top:503px;" width="40" height="40" viewBox="0 0 24 24"><path fill="#787878" d="M19 6.41L17.59 5 12 10.59 6.41 5 5 6.41 10.59 12 5 17.59 6.41 19 12 13.41 17.59 19 19 17.59 13.41 12z"/></svg>
<div class="t" style="left:1708.0px;top:575.9px;font-size:22px;color:#5f6368;font-weight:400;font-family:'Liberation Sans', sans-serif;-webkit-text-stroke:0.3px #5f6368;">Summarize by</div>
<div class="r" style="left:1704px;top:606px;width:216px;height:47px;border:2px solid #dadce0;border-radius:8px;background:#fff"></div>
<div class="t" style="left:1722.0px;top:621.7px;font-size:24px;color:#3c4043;font-weight:400;font-family:'Liberation Sans', sans-serif;-webkit-text-stroke:0.3px #3c4043;">SUM</div>
<svg class="r" style="left:1889px;top:627px;" width="18" height="9" viewBox="0 0 10 5"><path fill="#5f6368" d="M0 0 H10 L5 5 Z"/></svg>
<div class="r" style="left:1688px;top:706px;width:504px;height:184px;background:#fff;border-radius:5px;box-shadow:0 0 2px rgba(60,64,67,0.12),0 1px 6px 1px rgba(60,64,67,0.10)"></div>
<div class="t" style="left:1712.0px;top:731.8px;font-size:28px;color:#202124;font-weight:400;font-family:'Liberation Sans', sans-serif;letter-spacing:1.0px;-webkit-text-stroke:0.8px #202124;">Total price</div>
<div class="t" style="left:1708.0px;top:790.4px;font-size:22px;color:#5f6368;font-weight:400;font-family:'Liberation Sans', sans-serif;-webkit-text-stroke:0.3px #5f6368;">Summarize by</div>
<div class="r" style="left:1704px;top:822px;width:216px;height:47px;border:2px solid #dadce0;border-radius:8px;background:#fff"></div>
<div class="t" style="left:1722.0px;top:837.7px;font-size:24px;color:#3c4043;font-weight:400;font-family:'Liberation Sans', sans-serif;-webkit-text-stroke:0.3px #3c4043;">MEDIAN</div>
<svg class="r" style="left:1889px;top:843px;" width="18" height="9" viewBox="0 0 10 5"><path fill="#5f6368" d="M0 0 H10 L5 5 Z"/></svg>
<div class="r" style="left:1956px;top:822px;width:220px;height:51px;background:#f1f3f4;border-radius:8px"></div>
<div class="t" style="left:1974.0px;top:837.7px;font-size:24px;color:#3c4043;font-weight:400;font-family:'Liberation Sans', sans-serif;letter-spacing:0.2px;-webkit-text-stroke:0.3px #3c4043;">Default</div>
<svg class="r" style="left:2141px;top:843px;" width="18" height="9" viewBox="0 0 10 5"><path fill="#5f6368" d="M0 0 H10 L5 5 Z"/></svg>
<div class="t" style="left:1692.0px;top:958.3px;font-size:28px;color:#202124;font-weight:400;font-family:'Liberation Sans', sans-serif;letter-spacing:1.1px;-webkit-text-stroke:0.8px #202124;">Filters</div>
<div class="r" style="left:2078px;top:945px;width:110px;height:42px;border:2px solid #dadce0;border-radius:8px;background:#fff"></div>
<div class="t" style="left:2106.0px;top:953.4px;font-size:29px;color:#37803c;font-weight:400;font-family:'Liberation Sans', sans-serif;letter-spacing:1.6px;-webkit-text-stroke:0.8px #37803c;">Add</div>
<div class="r" style="left:1954px;top:538px;width:268px;height:280px;background:#fff;border-radius:8px;box-shadow:0 3px 8px rgba(60,64,67,0.28)"></div>
<div class="t" style="left:1988.0px;top:571.1px;font-size:27px;color:#202124;font-weight:400;font-family:'Liberation Sans', sans-serif;letter-spacing:0.8px;-webkit-text-stroke:0.3px #202124;">Default</div>
<div class="t" style="left:1988.0px;top:635.1px;font-size:27px;color:#202124;font-weight:400;font-family:'Liberation Sans', sans-serif;letter-spacing:0.8px;-webkit-text-stroke:0.3px #202124;">% of row</div>
<div class="t" style="left:1988.0px;top:699.1px;font-size:27px;color:#202124;font-weight:400;font-family:'Liberation Sans', sans-serif;letter-spacing:0.8px;-webkit-text-stroke:0.3px #202124;">% of column</div>
<div class="t" style="left:1988.0px;top:763.1px;font-size:27px;color:#202124;font-weight:400;font-family:'Liberation Sans', sans-serif;letter-spacing:0.8px;-webkit-text-stroke:0.3px #202124;">% of grand total</div>
<div class="r" style="left:1952px;top:542px;width:250px;height:257px;border:10px solid #e84128;"></div>
<svg class="r" style="left:0;top:0" width="2232" height="1038" viewBox="0 0 2232 1038"><polygon fill="#e84128" points="1524.3,842.8 1521.7,835.2 1887.7,704.2 1880.9,685.4 1936,691 1897.1,730.6 1890.3,711.8"/></svg>
</body></html>
